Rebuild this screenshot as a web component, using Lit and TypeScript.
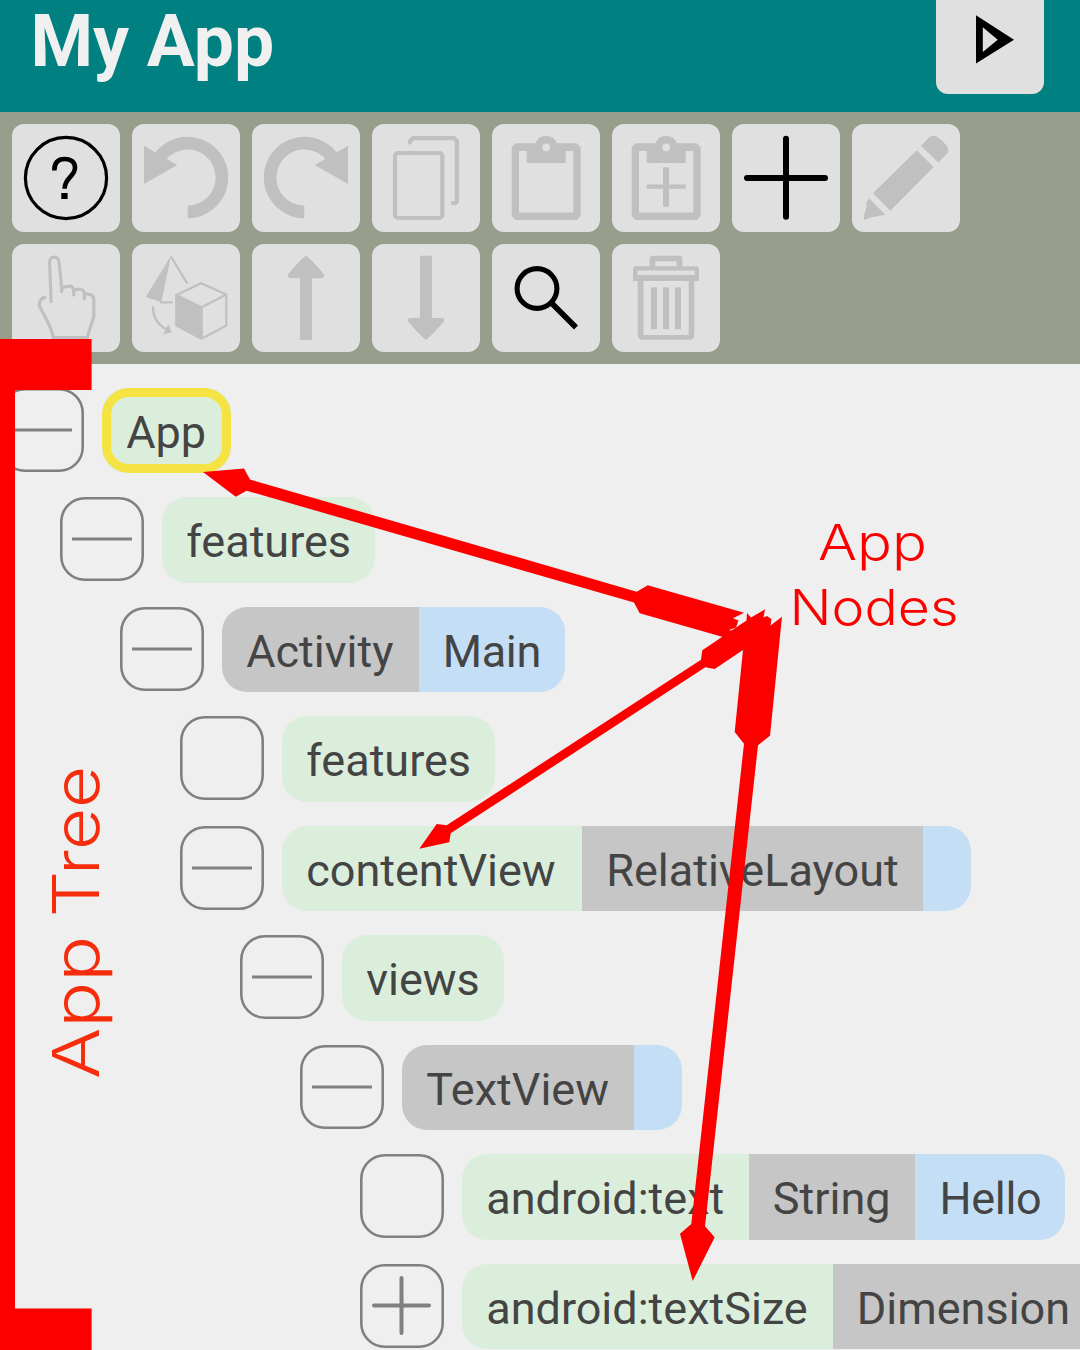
import { LitElement, html, svg, css, nothing } from "lit";
import { customElement, property } from "lit/decorators.js";
import { classMap } from "lit/directives/class-map.js";

/* Every icon is drawn on the 108-unit grid of its button. */
const undo = svg`
  <path class="fill" d="M12 21.7 45.3 41 12 60Z"/>
  <path class="line" stroke-width="12.6" d="M28.2 32.6A34.4 34.4 0 1 1 55.7 87.9"/>`;

const board = svg`
  <path class="fill" fill-rule="evenodd" d="M23.5 19.3H43.7C45 14.5 49 12 54.2 12S63.4 14.5 64.7 19.3H84.8L88.7 23.2V92L84.8 96H23.5L19.7 92V23.2ZM27 27V88.4H81.3V27H73.7V39H34.7V27ZM58 23.3A3.9 3.9 0 1 0 50.2 23.3A3.9 3.9 0 1 0 58 23.3Z"/>`;

const icons: Record<string, unknown> = {
  play: svg`<path class="fill" fill-rule="evenodd" d="M40 29.3 78 53.7 40 77.5ZM46.8 41.3V66L61.7 53.7Z"/>`,
  help: svg`
    <circle class="line" cx="54" cy="54" r="40.6" stroke-width="3.2"/>
    <path class="line" stroke-width="4.6" d="M42.3 46.5C42.3 38 46.5 35 52.8 35C59.3 35 63 38.3 63 43.8C63 52.5 52.6 53.5 52.6 64.7"/>
    <path class="fill" d="M49.3 69h6.3v6h-6.3z"/>`,
  undo,
  redo: svg`<g transform="translate(108 0) scale(-1 1)">${undo}</g>`,
  copy: svg`
    <rect class="line" x="23" y="29" width="47.3" height="65" rx="3" stroke-width="4.2"/>
    <path class="line round" stroke-width="4.3" d="M38 18.5V17.2L41 14.2H82.2L84.9 17V77.2L83 79.2H81"/>`,
  paste: board,
  pasteAdd: svg`${board}<path class="fill" d="M51 43.3h6v17.2h16.7v4.2H57v18h-6v-18H34.7v-4.2H51z"/>`,
  add: svg`<path class="line round" stroke-width="6" d="M54 14.8V92.8M15 54H93"/>`,
  edit: svg`
    <path class="fill" d="M69 21.7 77 13.5Q81 10.5 85.5 13Q91 16.5 94.8 22Q97.5 26.5 94.8 30L86.3 38.6Z"/>
    <path class="fill" d="M64.7 26.3 81.7 42.9 38.3 86.7 21 69.3Z"/>
    <path class="fill" d="M17.3 74.5 33.3 90.7 20 93.3 12 96V91L14.5 83V78Z"/>`,
  touch: svg`<path class="line" stroke-width="3.2" stroke-linejoin="round" d="M39.2 59 37.6 18C37.6 11.6 46.8 11.6 47 18C48 27 49.2 36 49.7 47.5C49.7 43 51.5 42.3 54 43C57.5 41 60.8 42.5 61.7 45.5V51C61.7 45 64 44.8 66.5 45.5C70 44.5 72.3 47 72.3 50V55C72.3 50 74.5 49 76.8 50.3C80 50.3 81.8 52.5 81.8 56V71C81.8 76 77.5 83 75.5 93.7H41.3C39.5 81 31.5 71.5 27.3 61.5C27.3 56 30 53.3 34.2 53.3"/>`,
  shapes: svg`
    <path class="fill" d="M39 11.7 29.3 58.3 13.7 53Z"/>
    <path class="line" stroke-width="2.3" d="M39 12.5 55.3 39.7M28 58.3H40.5M21 62.3C21 73 26 81 34.5 85.5"/>
    <path class="fill" d="M36.3 80 39.7 88.2 31 90.5Z"/>
    <path class="line" stroke-width="2.2" d="M44.3 51 69.2 39.2 94.3 50.5V81.7L69.5 94.8 44.3 81.7ZM44.3 51 69.7 63.2 94.3 50.5M69.7 63V94.8"/>
    <path class="fill" d="M43.8 50.8 69.7 63V95L43.8 81.7Z"/>`,
  up: svg`<path class="fill" d="M54 11.5C58 14.5 67 24 72.2 30.6Q72.5 34.3 69.5 34.3H60V96H48V34.3H38.5Q35.5 34.3 35.8 30.6C41 24 50 14.5 54 11.5Z"/>`,
  down: svg`<path class="fill" d="M48 11.7H60V74H69.5Q72.5 74 72.2 76.8C67 83.5 58 93 54 96C50 93 41 83.5 35.8 76.8Q35.5 74 38.5 74H48Z"/>`,
  search: svg`
    <circle class="line" cx="45" cy="44.5" r="19.9" stroke-width="5.1"/>
    <path class="line" stroke-width="5.6" d="M59 58.6 84 83.4"/>`,
  trash: svg`
    <path class="line" stroke-width="5.6" stroke-linejoin="round" d="M40.5 24V14.5H67.5V24"/>
    <path class="fill" fill-rule="evenodd" d="M23 22.3H85L87 24.3V37H82.3V92.5L79.5 95.8H28.5L25.7 92.5V37H21V24.3ZM25.5 26.5V31H82.7V26.5ZM31.5 37V91H76.7V37Z"/>
    <path class="fill" d="M39 43.2h6v42h-6zM51 43.2h6v42h-6zM63 43.2h6v42h-6z"/>`,
};

type Part = { kind: "name" | "type" | "value"; text: string; width: number };
type Node = { depth: number; toggle: "open" | "closed" | "leaf"; parts: Part[]; selected?: boolean };

const name = (text: string, width: number): Part => ({ kind: "name", text, width });
const type = (text: string, width: number): Part => ({ kind: "type", text, width });
const value = (text: string, width = 48): Part => ({ kind: "value", text, width });

const tree: Node[] = [
  { depth: 0, toggle: "open", parts: [name("App", 129)], selected: true },
  { depth: 1, toggle: "open", parts: [name("features", 213)] },
  { depth: 2, toggle: "open", parts: [type("Activity", 196.5), value("Main", 146.7)] },
  { depth: 3, toggle: "leaf", parts: [name("features", 213)] },
  { depth: 3, toggle: "open", parts: [name("contentView", 300), type("RelativeLayout", 340.5), value("")] },
  { depth: 4, toggle: "open", parts: [name("views", 162)] },
  { depth: 5, toggle: "open", parts: [type("TextView", 232.4), value("")] },
  { depth: 6, toggle: "leaf", parts: [name("android:text", 286.6), type("String", 166.6), value("Hello", 149.8)] },
  { depth: 6, toggle: "closed", parts: [name("android:textSize", 370.6), type("Dimension", 260), value("")] },
];

const tools: Array<[string, string, boolean]> = [
  ["help", "Help", true],
  ["undo", "Undo", false],
  ["redo", "Redo", false],
  ["copy", "Copy", false],
  ["paste", "Paste", false],
  ["pasteAdd", "Paste inside", false],
  ["add", "Add", true],
  ["edit", "Edit", false],
  ["touch", "Select", false],
  ["shapes", "Convert", false],
  ["up", "Move up", false],
  ["down", "Move down", false],
  ["search", "Search", true],
  ["trash", "Delete", false],
];

@customElement("tool-button")
class ToolButton extends LitElement {
  @property() icon = "";
  @property() label = "";
  @property({ type: Boolean }) enabled = false;

  static styles = css`
    :host { display: block; width: 108px; height: 108px; }
    .button {
      display: block; width: 108px; height: 108px; padding: 0; border: 0;
      border-radius: 12px; background: #e0e0e0; color: #c0c0c0;
    }
    .enabled { color: #000; }
    .icon { display: block; width: 108px; height: 108px; }
    .fill { fill: currentColor; }
    .line { fill: none; stroke: currentColor; }
    .round { stroke-linecap: round; }
  `;

  render() {
    return html`<button class=${classMap({ button: true, enabled: this.enabled })} aria-label=${this.label}>
      <svg class="icon" viewBox="0 0 108 108">${icons[this.icon]}</svg>
    </button>`;
  }
}

@customElement("tree-row")
class TreeRow extends LitElement {
  @property({ attribute: false }) node!: Node;

  static styles = css`
    :host { display: block; height: 85.5px; }
    .row { display: flex; align-items: flex-start; gap: 18px; height: 85.5px; }
    .toggle { flex: none; display: block; width: 84px; height: 84px; fill: none; stroke: #808080; }
    .chip {
      position: relative; flex: none; display: flex; height: 85.5px;
      border-radius: 25px; overflow: hidden;
    }
    .ring {
      position: absolute; inset: 0; border: 9px solid #f5e243; border-radius: 27px;
    }
    .part {
      box-sizing: border-box; flex: none; padding: 2px 0 0 24.2px; white-space: pre;
      font: 45px/85.5px Roboto, sans-serif; color: #444;
    }
    .name { background: #dbeedc; }
    .type { background: #c6c6c6; }
    .value { background: #c4def5; letter-spacing: -0.3px; }
  `;

  render() {
    const { depth, toggle, parts, selected } = this.node;
    return html`<div class="row" style="padding-left:${depth * 60}px">
      <svg class="toggle" viewBox="0 0 84 84">
        <rect x="1.3" y="1.3" width="81.4" height="81.4" rx="23.5" stroke-width="2.6"/>
        ${toggle === "open" ? svg`<path stroke-width="3" d="M12 42H72"/>` : nothing}
        ${toggle === "closed"
          ? svg`<path stroke-width="4" stroke-linecap="round" d="M14 41.5H69M41.5 14V69"/>`
          : nothing}
      </svg>
      <div class="chip">
        ${parts.map((p) => html`<span class="part ${p.kind}" style="width:${p.width}px">${p.text}</span>`)}
        ${selected ? html`<span class="ring"></span>` : nothing}
      </div>
    </div>`;
  }
}

@customElement("app-root")
class AppRoot extends LitElement {
  static styles = css`
    :host {
      position: relative; display: block; width: 1080px; height: 1350px;
      overflow: hidden; background: #efefef;
    }
    .header {
      display: flex; justify-content: space-between; align-items: flex-start;
      box-sizing: border-box; height: 111.6px; padding: 0 36px 0 30.5px; background: #008081;
    }
    .title { margin: 0; font: 700 71.5px/84px Roboto, sans-serif; color: #f0f0f0; }
    .run { margin-top: -14px; }
    .toolbar {
      display: flex; flex-wrap: wrap; align-content: flex-start; gap: 12px;
      box-sizing: border-box; height: 252px; padding: 12.4px 108px 12px 12px; background: #979f8c;
    }
    .tree { display: flex; flex-direction: column; gap: 24px; padding-top: 24.4px; }
    .notes { position: absolute; left: 0; top: 0; width: 1080px; height: 1350px; }
    .mark { fill: #fc0000; }
    .note { fill: #fc0000; font: 340 49.5px Inter, sans-serif; }
    .side { fill: #f52d0d; font: 320 64.5px Inter, sans-serif; }
  `;

  render() {
    return html`
      <header class="header">
        <h1 class="title">My App</h1>
        <tool-button class="run" icon="play" label="Run" enabled></tool-button>
      </header>
      <nav class="toolbar">
        ${tools.map(([icon, label, enabled]) => html`<tool-button .icon=${icon} .label=${label} .enabled=${enabled}></tool-button>`)}
      </nav>
      <main class="tree">${tree.map((node) => html`<tree-row .node=${node}></tree-row>`)}</main>
      <svg class="notes" viewBox="0 0 1080 1350">
        <path class="mark" d="M0 339H91.6V390H15V1308.6H91.6V1350H0Z"/>
        <path class="mark" d="M203 472 244 468.5 250 479.5 636.7 591.7 647.7 585.3 744 612.7 733 618.2 738.5 620.5 736 627.5 729 630 733 631 723 637 639.7 613.3 634 602.5 246.7 490.7 235.7 496.7Z"/>
        <path class="mark" d="M419.3 848.7 436.7 824 446.7 825.3 701 659.7 702.3 650.3 746.5 620.5 747 613 751 617.5 765 609.3 763.5 617.5 767 616 771.5 619 770.5 625.5 743 650 714.7 669 705.3 667.3 450.7 833.3 449.3 842.3Z"/>
        <path class="mark" d="M743 650 760 617 770.5 625.5 782 616.7 770 735.7 758 745.3 705 1226.3 714.7 1237.3 692.7 1281 680 1233.7 691.3 1224 744 743.7 734.7 732Z"/>
        <text class="note" x="818" y="560" textLength="109" lengthAdjust="spacingAndGlyphs">App</text>
        <text class="note" x="789.5" y="625" textLength="169" lengthAdjust="spacingAndGlyphs">Nodes</text>
        <text class="side" transform="translate(99 1079) rotate(-90)"><tspan textLength="143" lengthAdjust="spacingAndGlyphs">App</tspan> <tspan x="162" textLength="151" lengthAdjust="spacingAndGlyphs">Tree</tspan></text>
      </svg>
    `;
  }
}
